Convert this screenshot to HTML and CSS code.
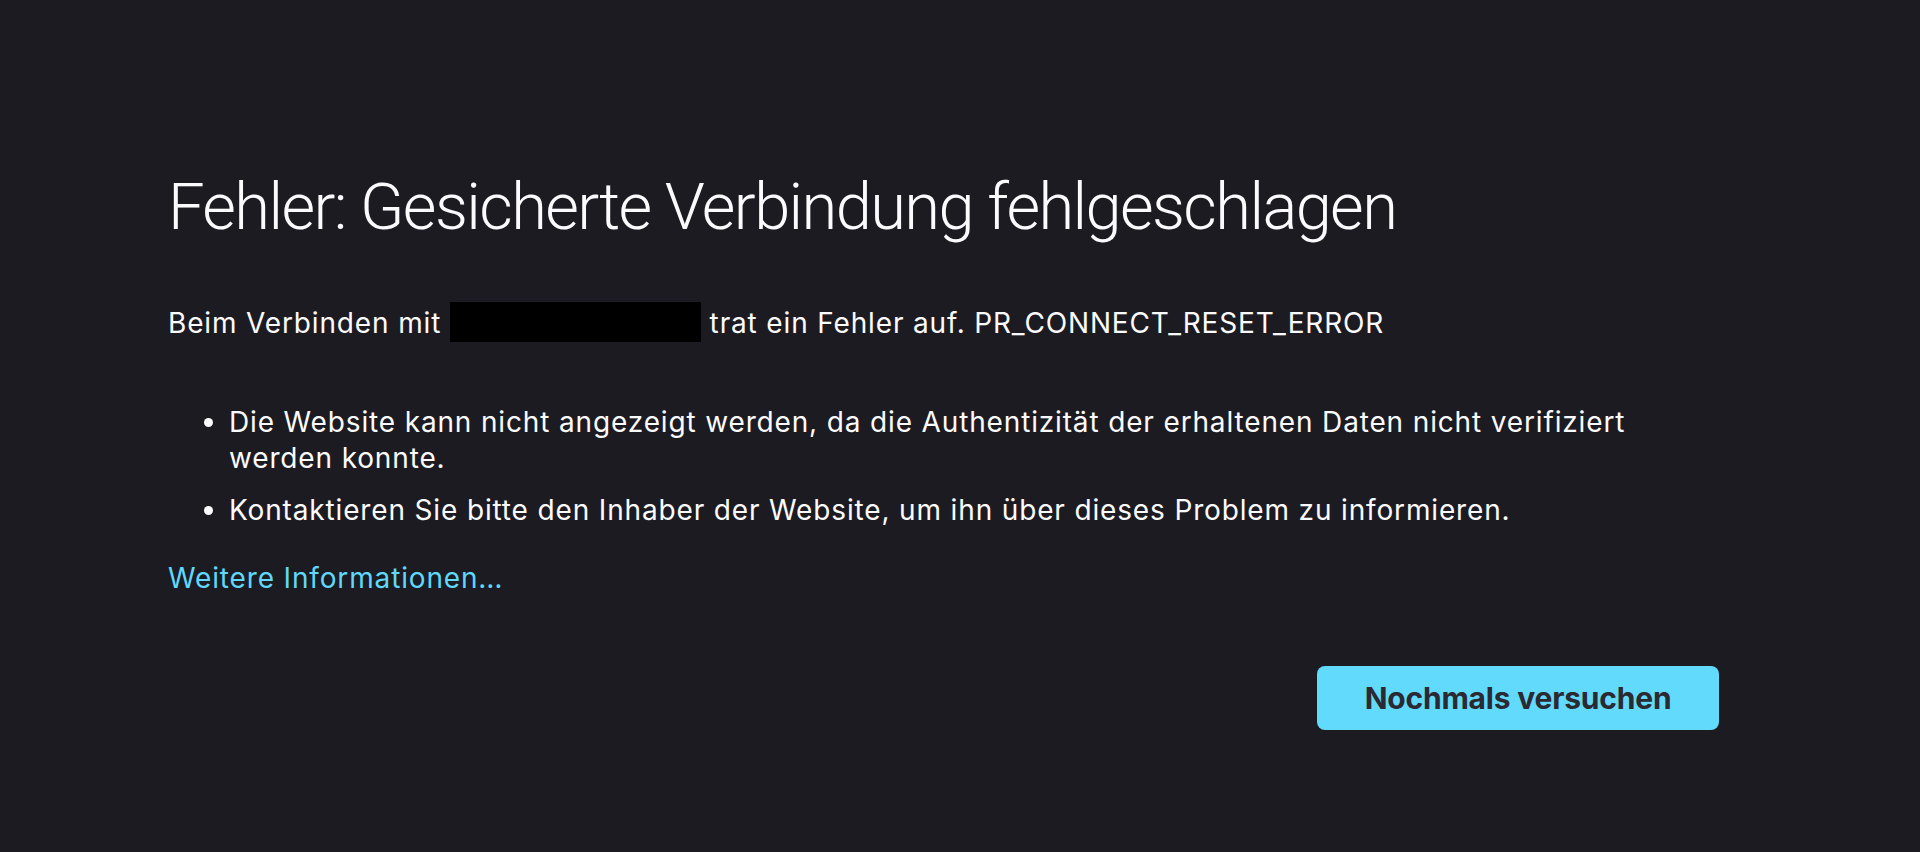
FILE: index.html
```html
<!DOCTYPE html>
<html lang="de">
<head>
    <meta charset="UTF-8">
    <title>Fehler: Gesicherte Verbindung fehlgeschlagen</title>
    <link rel="stylesheet" href="styles.css">
</head>
<body>
    <div class="container">
        <h1 class="title">Fehler: Gesicherte Verbindung fehlgeschlagen</h1>
        <p class="short-desc">Beim Verbinden mit <span class="redacted"></span> trat ein Fehler auf. PR_CONNECT_RESET_ERROR</p>
        <ul class="details">
            <li>Die Website kann nicht angezeigt werden, da die Authentizität der erhaltenen Daten nicht verifiziert werden konnte.</li>
            <li>Kontaktieren Sie bitte den Inhaber der Website, um ihn über dieses Problem zu informieren.</li>
        </ul>
        <a class="learn-more" href="#">Weitere Informationen…</a>
        <div class="button-container">
            <button class="primary">Nochmals versuchen</button>
        </div>
    </div>
</body>
</html>
```

FILE: styles.css
```css
html, body {
    margin: 0;
    height: 100%;
}
body {
    background-color: #1c1b22;
    color: #fbfbfe;
    font-family: Inter, "Noto Sans", sans-serif;
    font-size: 28px;
    letter-spacing: 0.85px;
    line-height: 36px;
}
.container {
    width: 1551px;
    margin-left: 168px;
    padding-top: 169px;
}
.title {
    font-family: Roboto, "Noto Sans", sans-serif;
    font-size: 65px;
    font-weight: 300;
    letter-spacing: -1.6px;
    line-height: 76px;
    margin: 0;
}
.short-desc {
    margin: 60px 0 0;
}
.redacted {
    display: inline-block;
    width: 251px;
    height: 40px;
    margin-top: -4px;
    background: #000;
    vertical-align: -9px;
}
.details {
    margin: 62px 0 0;
    padding-left: 61px;
}
.details li + li {
    margin-top: 16px;
}
.learn-more {
    display: block;
    margin-top: 32px;
    color: #5fd8fa;
    text-decoration: none;
}
.button-container {
    display: flex;
    justify-content: flex-end;
    margin-top: 70px;
}
button.primary {
    width: 402px;
    height: 64px;
    border: none;
    border-radius: 8px;
    background: #62dafb;
    color: #2b2a33;
    font-family: Inter, "Noto Sans", sans-serif;
    font-size: 30px;
    font-weight: 700;
    letter-spacing: -0.2px;
    cursor: pointer;
}
```
